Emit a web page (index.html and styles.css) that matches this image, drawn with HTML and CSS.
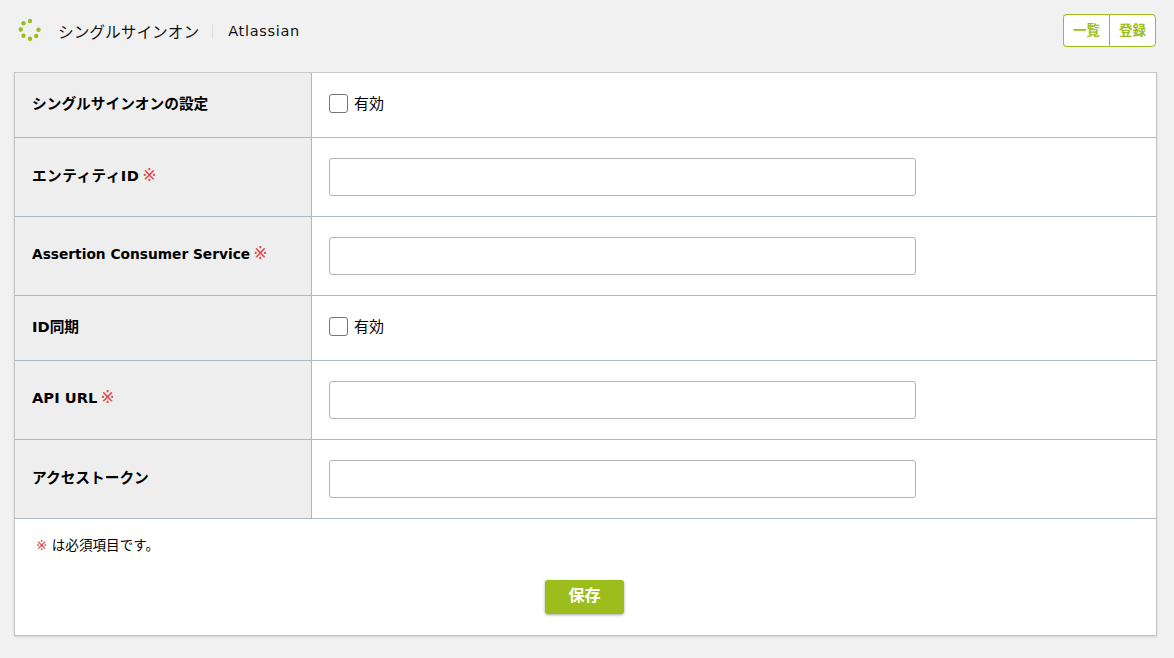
FILE: index.html
```html
<!DOCTYPE html>
<html lang="ja">
<head>
  <meta charset="UTF-8">
  <title>シングルサインオン</title>
  <link rel="stylesheet" href="styles.css">
</head>
<body>
  <div class="header">
    <div class="header-left">
      <svg class="spinner" viewBox="0 0 24 24" width="24" height="24">
        <circle cx="12" cy="3" r="2.2"/>
        <circle cx="5.5" cy="5.2" r="2.2"/>
        <circle cx="2.8" cy="11.5" r="2.2"/>
        <circle cx="5.5" cy="17.8" r="2.2"/>
        <circle cx="12" cy="20.8" r="2.2"/>
        <circle cx="18.2" cy="18" r="2.2"/>
        <circle cx="20.5" cy="11.7" r="2.2"/>
      </svg>
      <span class="title">シングルサインオン</span>
      <span class="subtitle">Atlassian</span>
    </div>
    <div class="btn-group">
      <a href="#" class="btn-small">一覧</a>
      <a href="#" class="btn-small">登録</a>
    </div>
  </div>

  <div class="card">
    <table class="form-table">
      <tr class="row-check">
        <th>シングルサインオンの設定</th>
        <td><label class="check"><span class="checkbox"></span>有効</label></td>
      </tr>
      <tr>
        <th><span class="th-wide">エンティティID</span> <span class="req">※</span></th>
        <td><input type="text" class="text-input"></td>
      </tr>
      <tr>
        <th><span class="th-latin">Assertion Consumer Service</span> <span class="req">※</span></th>
        <td><input type="text" class="text-input"></td>
      </tr>
      <tr class="row-check">
        <th>ID同期</th>
        <td><label class="check"><span class="checkbox"></span>有効</label></td>
      </tr>
      <tr>
        <th>API URL <span class="req">※</span></th>
        <td><input type="text" class="text-input"></td>
      </tr>
      <tr>
        <th>アクセストークン</th>
        <td><input type="text" class="text-input"></td>
      </tr>
    </table>
    <p class="note"><span class="req">※</span> は必須項目です。</p>
    <div class="actions">
      <button type="button" class="btn-save">保存</button>
    </div>
  </div>
</body>
</html>
```

FILE: styles.css
```css
body {
  margin: 0;
  padding: 0 17px 22px 14px;
  font-family: "DejaVu Sans", "Noto Sans CJK JP", sans-serif;
  font-size: 14px;
  color: #000;
  background-color: #f1f1f1;
}

.header {
  display: flex;
  justify-content: space-between;
  align-items: center;
  height: 72px;
  padding-bottom: 12px;
  box-sizing: border-box;
}

.header-left {
  display: flex;
  align-items: center;
}

.spinner {
  margin: 0 16px 0 4px;
  fill: #9dbd1d;
}

.title {
  font-size: 15.7px;
  padding: 2px 14px 0 0;
  margin-right: 15px;
  position: relative;
  color: #111;
}

.title::after {
  content: "";
  position: absolute;
  right: 0;
  top: 6px;
  bottom: 4px;
  width: 1px;
  background-color: #ddd;
}

.subtitle {
  font-size: 14.5px;
  letter-spacing: 0.7px;
  padding-top: 2px;
  color: #111;
}

.btn-group {
  display: flex;
  margin-right: 1px;
}

.btn-small {
  display: block;
  width: 47px;
  height: 33px;
  line-height: 30px;
  text-align: center;
  box-sizing: border-box;
  font-size: 13.5px;
  font-weight: bold;
  color: #9dbd1d;
  text-decoration: none;
  background-color: #fff;
  border: 1px solid #9dbd1d;
}

.btn-small:first-child {
  width: 46px;
  border-radius: 4px 0 0 4px;
  border-right: 0;
}

.btn-small:last-child {
  border-radius: 0 4px 4px 0;
}

.card {
  background-color: #fff;
  border: 1px solid #c4c4c4;
  border-top-color: #c9c9c9;
  box-shadow: 0 1px 2px rgba(0, 0, 0, 0.15);
}

.form-table {
  width: 100%;
  border-collapse: separate;
  border-spacing: 0;
}

.form-table th,
.form-table td {
  border-bottom: 1px solid #aeb8c0;
  padding: 0 17px;
  height: 79px;
  box-sizing: border-box;
}

.form-table tr.row-check th,
.form-table tr.row-check td {
  height: 65px;
}

.form-table th {
  width: 297px;
  padding-bottom: 6px;
  text-align: left;
  font-size: 14.7px;
  background-color: #eee;
  border-right: 1px solid #aeb8c0;
}

.form-table tr.row-check td {
  padding-bottom: 6px;
}

.th-latin {
  font-size: 13.75px;
}

.th-wide {
  letter-spacing: 0.4px;
}

.req {
  color: #e0484a;
  font-weight: normal;
  line-height: 1;
}

.form-table .req {
  font-size: 17px;
  margin-left: -2px;
}

.check {
  display: flex;
  align-items: center;
  font-size: 15px;
}

.checkbox {
  width: 19px;
  height: 19px;
  box-sizing: border-box;
  border: 1px solid #777;
  border-radius: 3px;
  background-color: #fff;
  margin: 2px 6px 0 0;
}

.text-input {
  display: block;
  width: 587px;
  height: 38px;
  box-sizing: border-box;
  border: 1px solid #b4b4b4;
  border-radius: 3px;
  background-color: #fff;
}

.note {
  margin: 0;
  padding: 17px 21px 0;
  font-size: 13.6px;
  line-height: 18px;
}

.actions {
  display: flex;
  justify-content: center;
  padding: 26px 2px 21px 0;
}

.btn-save {
  width: 79px;
  height: 34px;
  border: 0;
  border-radius: 3px;
  background-color: #9dbd1d;
  color: #fff;
  font-family: inherit;
  font-size: 16px;
  font-weight: bold;
  padding: 0 0 7px;
  box-shadow: 0 1px 3px rgba(0, 0, 0, 0.35);
}
```
